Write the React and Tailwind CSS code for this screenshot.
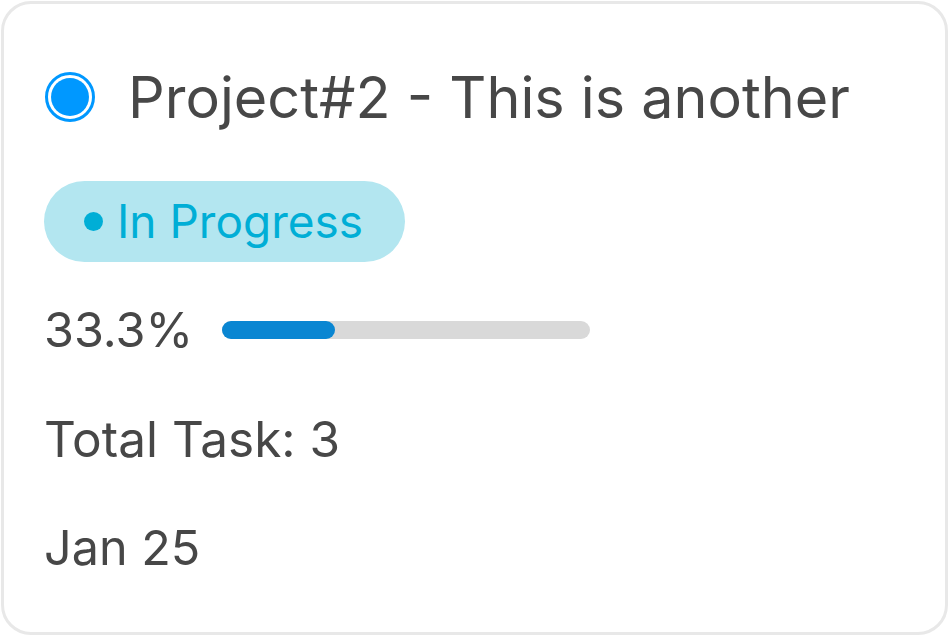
// Proje karti: baslik, durum rozeti, ilerleme cubugu, gorev sayisi ve tarih.
function ProjectCard() {
  return (
    <div className="w-[947px] h-[634px] border-[3px] border-[#e8e8e8] rounded-[30px] bg-white px-[40px] flex flex-col">
      {/* Baslik satiri */}
      <div className="mt-[57px] h-[72px] flex items-center gap-[33px] pl-[1px]">
        <span className="w-[50px] h-[50px] shrink-0 rounded-full border-[3px] border-[#0098ff] p-[3px]">
          <span className="block w-full h-full rounded-full bg-[#0098ff]" />
        </span>
        <h2 className="text-[57.5px] leading-[72px] text-[#474747] whitespace-nowrap">Project#2 - This is another</h2>
      </div>

      {/* Durum rozeti */}
      <div className="mt-[48px] h-[81px] w-[361px] rounded-full bg-[#b3e6f0] flex items-center pl-[40px] gap-[14px]">
        <span className="w-[19px] h-[19px] rounded-full bg-[#00aed6]" />
        <span className="text-[46px] text-[#00aed6]">In Progress</span>
      </div>

      {/* Ilerleme */}
      <div className="mt-[38px] h-[60px] flex items-center gap-[29px]">
        <span className="text-[48.5px] text-[#474747]">33.3%</span>
        <div className="w-[368px] h-[18px] rounded-full bg-[#d9d9d9]">
          <div className="w-[113px] h-full rounded-full bg-[#0a86d2]" />
        </div>
      </div>

      <p className="mt-[49px] h-[60px] flex items-center text-[49.5px] text-[#474747]">Total Task: 3</p>
      <p className="mt-[49px] h-[60px] flex items-center text-[48.5px] text-[#474747]">Jan 25</p>
    </div>
  );
}

export default function App() {
  return (
    <div className="w-[950px] h-[636px] bg-white p-[1px]" style={{ fontFamily: "Inter, sans-serif" }}>
      <ProjectCard />
    </div>
  );
}
